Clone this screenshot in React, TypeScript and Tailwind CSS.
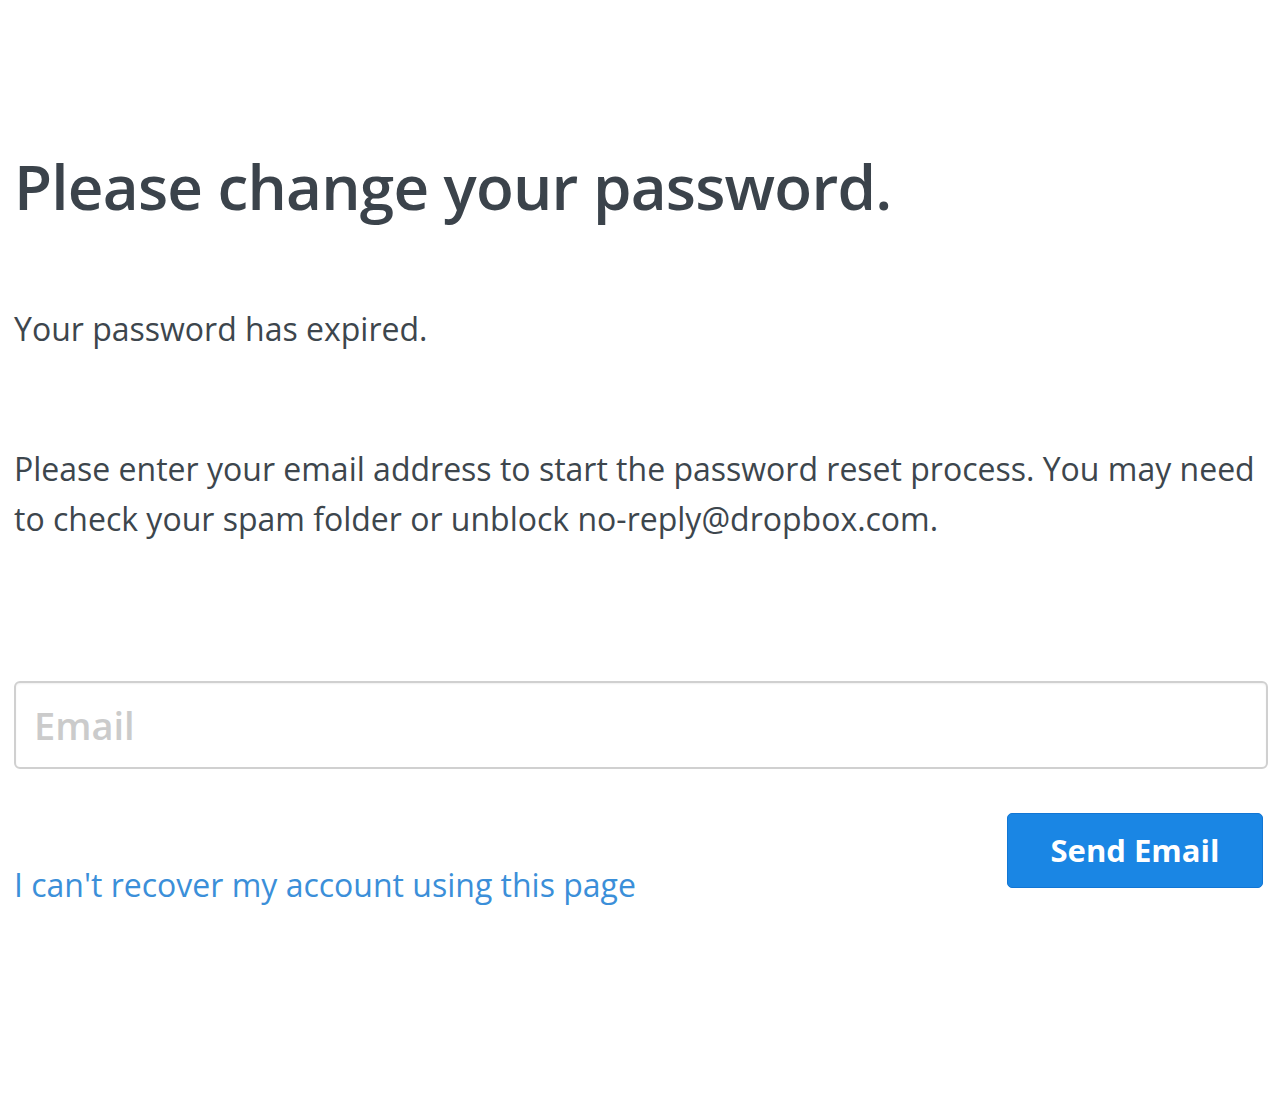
import React, { useState } from 'react';

export default function App() {
  const [email, setEmail] = useState('');

  return (
    <div className="min-h-[1100px] bg-white text-[#3d464d]" style={{ fontFamily: '"Open Sans", "Noto Sans", sans-serif' }}>
      <div className="pl-[14px] pr-[12px] pt-[146px]">
        <h1 className="text-[62px] font-semibold leading-[80px] tracking-[-0.8px] text-[#3b434b]">
          Please change your password.
        </h1>
        <p className="mt-[83px] text-[32px] leading-[40px]">Your password has expired.</p>
        <p className="mt-[95px] text-[32px] leading-[50px]">
          Please enter your email address to start the password reset process. You may need to check your spam folder or unblock no-reply@dropbox.com.
        </p>
        <input
          type="email"
          value={email}
          onChange={e => setEmail(e.target.value)}
          placeholder="Email"
          className="mt-[137px] block h-[88px] w-full rounded-[6px] border-2 border-[#d0d0d0] px-[18px] text-[38px] font-semibold text-[#3d464d] shadow-[inset_0_1px_2px_rgba(0,0,0,0.06)] outline-none placeholder:text-[#cbcbcb]"
        />
        <div className="mt-[44px] flex items-start justify-between">
          <a href="#" className="mt-[50px] text-[32px] leading-[44px] text-[#3b8fd9]">
            I can't recover my account using this page
          </a>
          <button className="mr-[5px] h-[75px] w-[256px] rounded-[5px] border border-[#1276d4] bg-[#1a86e4] text-[31px] font-bold text-white">
            Send Email
          </button>
        </div>
      </div>
    </div>
  );
}
